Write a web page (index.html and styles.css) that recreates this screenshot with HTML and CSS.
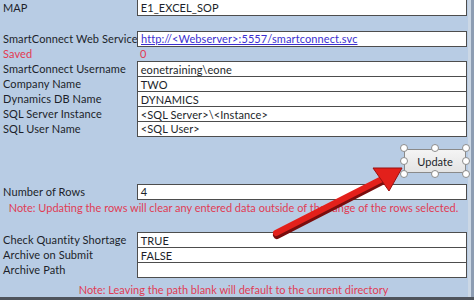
FILE: index.html
```html
<!DOCTYPE html>
<html lang="en">
<head>
    <meta charset="UTF-8">
    <title>SmartConnect Settings</title>
    <link rel="stylesheet" href="styles.css">
</head>
<body>
    <div class="sheet">
        <div class="row first">
            <div class="label">MAP</div>
            <div class="cell boxed single">E1_EXCEL_SOP</div>
        </div>

        <div class="gap"></div>

        <div class="row">
            <div class="label">SmartConnect Web Service</div>
            <div class="cell boxed single"><a class="link" href="#">http://&lt;Webserver&gt;:5557/smartconnect.svc</a></div>
        </div>
        <div class="row">
            <div class="label saved">Saved</div>
            <div class="cell saved">0</div>
        </div>

        <div class="group">
            <div class="row">
                <div class="label">SmartConnect Username</div>
                <div class="cell boxed">eonetraining\eone</div>
            </div>
            <div class="row">
                <div class="label">Company Name</div>
                <div class="cell boxed">TWO</div>
            </div>
            <div class="row">
                <div class="label">Dynamics DB Name</div>
                <div class="cell boxed">DYNAMICS</div>
            </div>
            <div class="row">
                <div class="label">SQL Server Instance</div>
                <div class="cell boxed">&lt;SQL Server&gt;\&lt;Instance&gt;</div>
            </div>
            <div class="row">
                <div class="label">SQL User Name</div>
                <div class="cell boxed last">&lt;SQL User&gt;</div>
            </div>
        </div>

        <div class="button-area">
            <div class="selected">
                <button class="update">Update</button>
                <span class="handle h-tl"></span>
                <span class="handle h-tc"></span>
                <span class="handle h-tr"></span>
                <span class="handle h-ml"></span>
                <span class="handle h-mr"></span>
                <span class="handle h-bl"></span>
                <span class="handle h-bc"></span>
                <span class="handle h-br"></span>
            </div>
        </div>

        <div class="row">
            <div class="label">Number of Rows</div>
            <div class="cell boxed single">4</div>
        </div>
        <div class="note">Note: Updating the rows will clear any entered data outside of the range of the rows selected.</div>

        <div class="gap"></div>

        <div class="group">
            <div class="row">
                <div class="label">Check Quantity Shortage</div>
                <div class="cell boxed">TRUE</div>
            </div>
            <div class="row">
                <div class="label">Archive on Submit</div>
                <div class="cell boxed">FALSE</div>
            </div>
            <div class="row">
                <div class="label">Archive Path</div>
                <div class="cell boxed last"></div>
            </div>
        </div>

        <div class="note bottom-note">Note: Leaving the path blank will default to the current directory</div>

        <svg class="arrow" width="474" height="300" viewBox="0 0 474 300">
            <line x1="277" y1="235" x2="384" y2="180" stroke="#7a0d0d" stroke-width="8" stroke-linecap="round"/>
            <line x1="276" y1="233" x2="384" y2="178" stroke="#e3201b" stroke-width="6" stroke-linecap="round"/>
            <polygon points="402,168 373,168 389,191" fill="#e3201b" stroke="#9a1010" stroke-width="1"/>
        </svg>
    </div>
    <div class="status"></div>
</body>
</html>
```

FILE: styles.css
```css
body {
    margin: 0;
    width: 474px;
    height: 300px;
    overflow: hidden;
    display: flex;
    flex-direction: column;
    background-color: #b8cce4;
    font-family: Lato, 'Liberation Sans', sans-serif;
    font-size: 11px;
    letter-spacing: 0.1px;
    color: #1c1f2a;
}

.sheet {
    position: relative;
    flex: none;
    width: 467px;
    height: 297px;
    overflow: hidden;
    border-right: 3px solid #8d9db3;
    box-shadow: inset -3px 0 0 #cbd7e5;
    padding-right: 4px;
    box-sizing: content-box;
}

.row {
    display: flex;
    height: 15px;
    line-height: 15px;
}

.row.first {
    margin-top: -1px;
    padding-top: 1px;
}

.label {
    width: 134px;
    padding-left: 3px;
    white-space: nowrap;
}

.cell {
    width: 326px;
    padding-left: 3px;
    white-space: nowrap;
    overflow: hidden;
}

.boxed {
    background: #ffffff;
    border: 1px solid #4d4d4d;
    border-bottom: none;
    height: 15px;
    line-height: 15px;
}

.boxed.single,
.boxed.last {
    border-bottom: 1px solid #4d4d4d;
    height: 14px;
    line-height: 14px;
}

.first .boxed {
    margin-top: -2px;
    height: 16px;
    line-height: 18px;
}

.saved {
    color: #e23a52;
}

.link {
    color: #3b2fd0;
    text-decoration: underline;
}

.gap {
    height: 16px;
}

.button-area {
    height: 48px;
    display: flex;
    justify-content: flex-end;
    align-items: center;
    padding-right: 1px;
    padding-top: 2px;
    box-sizing: border-box;
}

.selected {
    position: relative;
    width: 62px;
    height: 26px;
}

.update {
    width: 62px;
    height: 24px;
    margin-top: 1px;
    background: linear-gradient(180deg, #f4f4f4 0%, #e4e4e4 100%);
    border: 1px solid #8a8a8a;
    border-radius: 3px;
    font-family: Lato, 'Liberation Sans', sans-serif;
    font-size: 11px;
    color: #1c1f2a;
    padding: 0;
}

.handle {
    position: absolute;
    width: 6px;
    height: 6px;
    border: 1px solid #8c8c8c;
    border-radius: 50%;
    background: #ffffff;
}

.h-tl { left: -4px; top: -4px; }
.h-tc { left: 27px; top: -4px; }
.h-tr { right: -4px; top: -4px; }
.h-ml { left: -4px; top: 9px; }
.h-mr { right: -4px; top: 9px; }
.h-bl { left: -4px; bottom: -4px; }
.h-bc { left: 27px; bottom: -4px; }
.h-br { right: -4px; bottom: -4px; }

.note {
    color: #e03c55;
    text-align: center;
    height: 17px;
    line-height: 17px;
    white-space: nowrap;
    font-size: 11px;
    letter-spacing: 0;
}

.bottom-note {
    margin-top: 4px;
}

.arrow {
    position: absolute;
    left: 0;
    top: 0;
    pointer-events: none;
}

.status {
    flex: none;
    height: 3px;
    background: #4e535c;
}
```
